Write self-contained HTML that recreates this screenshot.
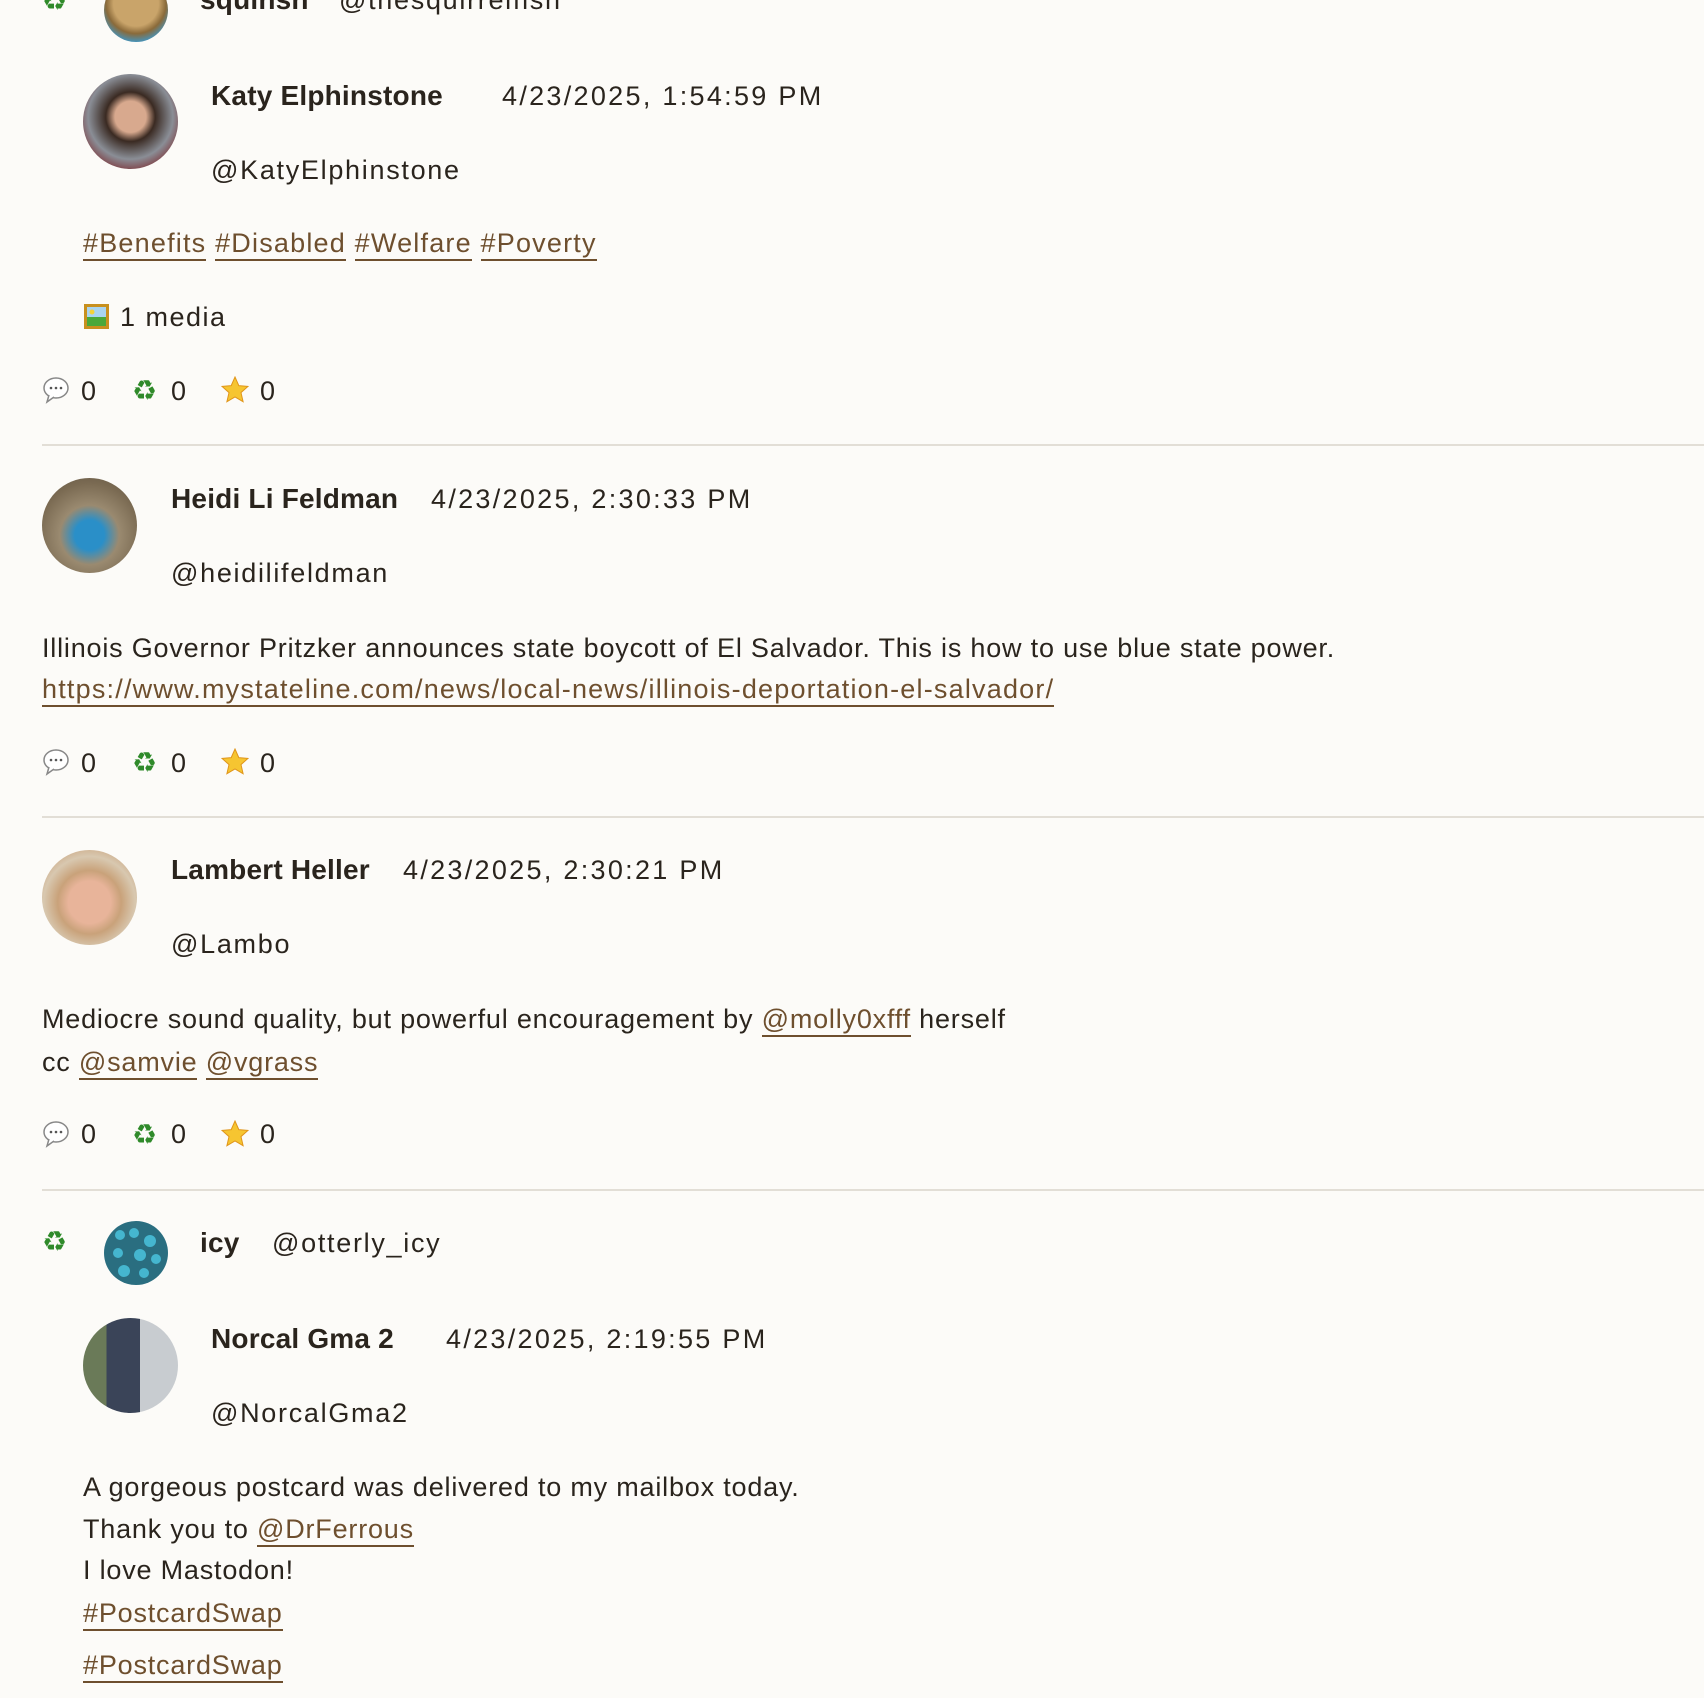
<!DOCTYPE html>
<html><head><meta charset="utf-8">
<style>
html,body{margin:0;padding:0;background:#fcfbf8;}
body{width:1704px;height:1698px;position:relative;overflow:hidden;font-family:"Liberation Sans",sans-serif;color:#2a241d;}
.t{position:absolute;line-height:36px;font-size:27px;white-space:nowrap;letter-spacing:0.8px;}
.b{font-weight:bold;letter-spacing:0.2px;font-size:28px;}
.h{letter-spacing:1.7px;}
.d{letter-spacing:2.3px;}
a{color:#6e4f2e;text-decoration:none;border-bottom:2px solid #6e4f2e;padding-bottom:1px;}
.av{position:absolute;border-radius:50%;overflow:hidden;}
.sep{position:absolute;left:42px;right:0;height:2px;background:#e2ded6;}
.rc{position:absolute;color:#2f8a2a;font-family:"DejaVu Sans",sans-serif;font-size:28px;line-height:30px;}
svg{position:absolute;}
</style></head><body>

<div class="rc" style="left:42px;top:-14px;">♻</div>
<div class="av" style="left:104px;top:-22px;width:64px;height:64px;background:radial-gradient(circle at 50% 40%,#c9a46a 0 45%,#8a6a3a 60%,#3a9ad0 80%);"></div>
<div class="t b" style="left:200px;top:-18px;">squinsh</div>
<div class="t h" style="left:339px;top:-18px;">@thesquirrelfish</div>

<div class="av" style="left:83px;top:74px;width:95px;height:95px;background:radial-gradient(circle at 50% 45%,#d8a98e 0 22%,#3a2a22 35%,#8a8e96 60%,#7a1e22 85%);"></div>
<div class="t b" style="left:211px;top:78px;">Katy Elphinstone</div>
<div class="t d" style="left:502px;top:78px;">4/23/2025, 1:54:59 PM</div>
<div class="t h" style="left:211px;top:152px;">@KatyElphinstone</div>
<div class="t" style="left:83px;top:225px;letter-spacing:1.2px;"><a>#Benefits</a> <a>#Disabled</a> <a>#Welfare</a> <a>#Poverty</a></div>
<svg style="left:83px;top:303px" width="27" height="27" viewBox="0 0 27 27"><rect x="1" y="1" width="25" height="25" fill="#c8901e"/><rect x="4" y="4" width="19" height="19" fill="#a9d4f0"/><rect x="4" y="14" width="19" height="9" fill="#4aa83a"/><circle cx="9" cy="9" r="2.5" fill="#f3d23a"/></svg>
<div class="t" style="left:120px;top:299px;letter-spacing:1.5px;">1 media</div>

<svg style="left:42px;top:376px" width="28" height="28" viewBox="0 0 28 28"><ellipse cx="14" cy="12" rx="12" ry="10" fill="#fff" stroke="#888" stroke-width="1.5"/><path d="M7 19 L5 26 L12 21" fill="#fff" stroke="#888" stroke-width="1.5"/><circle cx="9" cy="12" r="1.3" fill="#555"/><circle cx="14" cy="12" r="1.3" fill="#555"/><circle cx="19" cy="12" r="1.3" fill="#555"/></svg>
<div class="t" style="left:81px;top:373px;">0</div>
<div class="rc" style="left:132px;top:376px;">♻</div>
<div class="t" style="left:171px;top:373px;">0</div>
<svg style="left:221px;top:376px" width="28" height="28" viewBox="0 0 28 28"><path d="M14 1 L17.8 9.6 L27 10.4 L20 16.6 L22.1 25.7 L14 20.9 L5.9 25.7 L8 16.6 L1 10.4 L10.2 9.6 Z" fill="#f6c531" stroke="#e0951a" stroke-width="1"/></svg>
<div class="t" style="left:260px;top:373px;">0</div>
<div class="sep" style="top:444px;"></div>

<div class="av" style="left:42px;top:478px;width:95px;height:95px;background:radial-gradient(circle at 50% 60%,#2a8fc8 0 20%,#9a8a70 40%,#7a6a52 70%,#5e5242 100%);"></div>
<div class="t b" style="left:171px;top:481px;">Heidi Li Feldman</div>
<div class="t d" style="left:431px;top:481px;">4/23/2025, 2:30:33 PM</div>
<div class="t h" style="left:171px;top:555px;">@heidilifeldman</div>
<div class="t" style="left:42px;top:630px;">Illinois Governor Pritzker announces state boycott of El Salvador. This is how to use blue state power.</div>
<div class="t" style="left:42px;top:671px;letter-spacing:1.2px;"><a>https://www.mystateline.com/news/local-news/illinois-deportation-el-salvador/</a></div>
<svg style="left:42px;top:748px" width="28" height="28" viewBox="0 0 28 28"><ellipse cx="14" cy="12" rx="12" ry="10" fill="#fff" stroke="#888" stroke-width="1.5"/><path d="M7 19 L5 26 L12 21" fill="#fff" stroke="#888" stroke-width="1.5"/><circle cx="9" cy="12" r="1.3" fill="#555"/><circle cx="14" cy="12" r="1.3" fill="#555"/><circle cx="19" cy="12" r="1.3" fill="#555"/></svg>
<div class="t" style="left:81px;top:745px;">0</div>
<div class="rc" style="left:132px;top:748px;">♻</div>
<div class="t" style="left:171px;top:745px;">0</div>
<svg style="left:221px;top:748px" width="28" height="28" viewBox="0 0 28 28"><path d="M14 1 L17.8 9.6 L27 10.4 L20 16.6 L22.1 25.7 L14 20.9 L5.9 25.7 L8 16.6 L1 10.4 L10.2 9.6 Z" fill="#f6c531" stroke="#e0951a" stroke-width="1"/></svg>
<div class="t" style="left:260px;top:745px;">0</div>
<div class="sep" style="top:816px;"></div>

<div class="av" style="left:42px;top:850px;width:95px;height:95px;background:radial-gradient(circle at 50% 55%,#e8b49a 0 30%,#c9a27a 45%,#d8c8b0 65%,#c08a5a 100%);"></div>
<div class="t b" style="left:171px;top:852px;">Lambert Heller</div>
<div class="t d" style="left:403px;top:852px;">4/23/2025, 2:30:21 PM</div>
<div class="t h" style="left:171px;top:926px;">@Lambo</div>
<div class="t" style="left:42px;top:1001px;">Mediocre sound quality, but powerful encouragement by <a>@molly0xfff</a> herself</div>
<div class="t" style="left:42px;top:1044px;">cc <a>@samvie</a> <a>@vgrass</a></div>
<svg style="left:42px;top:1120px" width="28" height="28" viewBox="0 0 28 28"><ellipse cx="14" cy="12" rx="12" ry="10" fill="#fff" stroke="#888" stroke-width="1.5"/><path d="M7 19 L5 26 L12 21" fill="#fff" stroke="#888" stroke-width="1.5"/><circle cx="9" cy="12" r="1.3" fill="#555"/><circle cx="14" cy="12" r="1.3" fill="#555"/><circle cx="19" cy="12" r="1.3" fill="#555"/></svg>
<div class="t" style="left:81px;top:1116px;">0</div>
<div class="rc" style="left:132px;top:1120px;">♻</div>
<div class="t" style="left:171px;top:1116px;">0</div>
<svg style="left:221px;top:1120px" width="28" height="28" viewBox="0 0 28 28"><path d="M14 1 L17.8 9.6 L27 10.4 L20 16.6 L22.1 25.7 L14 20.9 L5.9 25.7 L8 16.6 L1 10.4 L10.2 9.6 Z" fill="#f6c531" stroke="#e0951a" stroke-width="1"/></svg>
<div class="t" style="left:260px;top:1116px;">0</div>
<div class="sep" style="top:1189px;"></div>

<div class="rc" style="left:42px;top:1227px;">♻</div>
<div class="av" style="left:104px;top:1221px;width:64px;height:64px;background:#2a6e80;">
<svg width="64" height="64" viewBox="0 0 64 64"><g fill="#45b6cf"><circle cx="16" cy="14" r="5"/><circle cx="30" cy="12" r="5"/><circle cx="46" cy="20" r="6"/><circle cx="14" cy="32" r="5"/><circle cx="36" cy="34" r="6"/><circle cx="52" cy="38" r="5"/><circle cx="20" cy="50" r="6"/><circle cx="40" cy="52" r="5"/></g></svg></div>
<div class="t b" style="left:200px;top:1225px;">icy</div>
<div class="t h" style="left:272px;top:1225px;">@otterly_icy</div>

<div class="av" style="left:83px;top:1318px;width:95px;height:95px;background:linear-gradient(90deg,#6a7a58 0 25%,#3a4458 25% 60%,#c8ccd0 60%);"></div>
<div class="t b" style="left:211px;top:1321px;">Norcal Gma 2</div>
<div class="t d" style="left:446px;top:1321px;">4/23/2025, 2:19:55 PM</div>
<div class="t h" style="left:211px;top:1395px;">@NorcalGma2</div>
<div class="t" style="left:83px;top:1469px;">A gorgeous postcard was delivered to my mailbox today.</div>
<div class="t" style="left:83px;top:1511px;">Thank you to <a>@DrFerrous</a></div>
<div class="t" style="left:83px;top:1552px;">I love Mastodon!</div>
<div class="t" style="left:83px;top:1595px;"><a>#PostcardSwap</a></div>
<div class="t" style="left:83px;top:1647px;"><a>#PostcardSwap</a></div>

</body></html>
